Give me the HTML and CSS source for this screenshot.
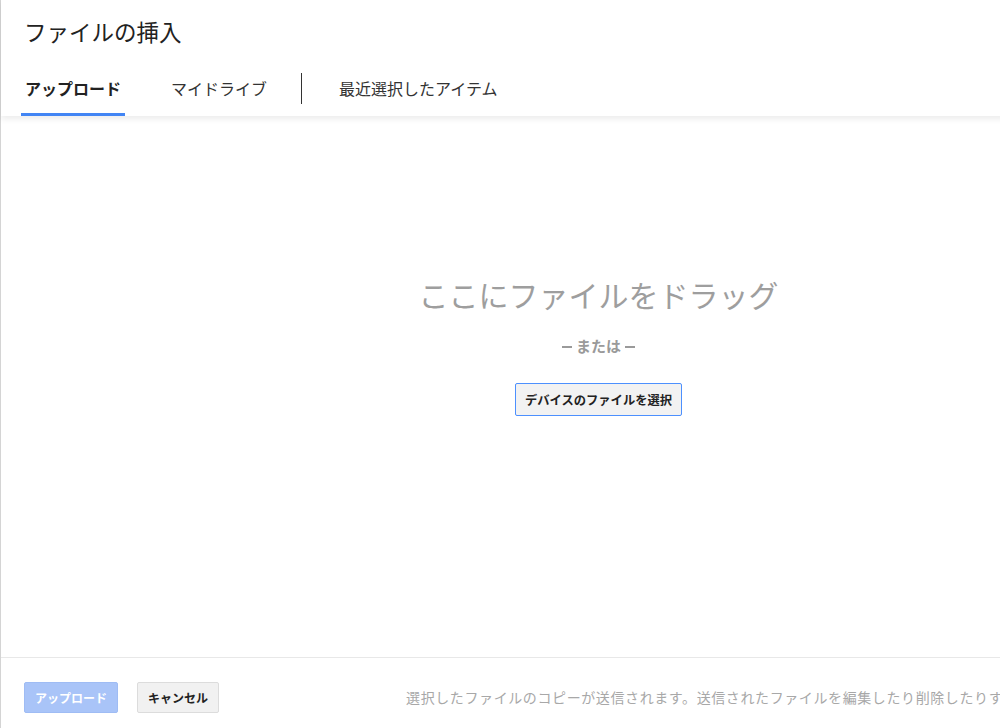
FILE: index.html
```html
<!DOCTYPE html>
<html lang="ja">
<head>
<meta charset="utf-8">
<title>ファイルの挿入</title>
<link rel="stylesheet" href="styles.css">
</head>
<body>
<div class="dialog">
  <header class="header">
    <h1 class="title">ファイルの挿入</h1>
    <nav class="tabs">
      <div class="tab active">アップロード</div>
      <div class="tab">マイドライブ</div>
      <div class="sep"></div>
      <div class="tab">最近選択したアイテム</div>
    </nav>
  </header>
  <main class="content">
    <div class="drag">ここにファイルをドラッグ</div>
    <div class="or"><span class="dash"></span>または<span class="dash"></span></div>
    <button class="pick">デバイスのファイルを選択</button>
  </main>
  <footer class="footer">
    <button class="btn primary">アップロード</button>
    <button class="btn">キャンセル</button>
    <div class="note">選択したファイルのコピーが送信されます。送信されたファイルを編集したり削除したりすることはできません。</div>
  </footer>
</div>
</body>
</html>
```

FILE: styles.css
```css
html, body {
  margin: 0;
  padding: 0;
  height: 100%;
  overflow: hidden;
  background: #fff;
}
body {
  font-family: "Noto Sans CJK JP", "Noto Sans", Arial, sans-serif;
  color: #222;
}
.dialog {
  width: 1196px;
  height: 728px;
  box-sizing: border-box;
  border-left: 1px solid #d4d4d4;
  display: flex;
  flex-direction: column;
}
.header {
  height: 116px;
  box-sizing: border-box;
  display: flex;
  flex-direction: column;
  box-shadow: 0 3px 6px rgba(0,0,0,0.08);
  position: relative;
  z-index: 1;
}
.title {
  margin: 17px 0 0 23px;
  font-size: 22.5px;
  font-weight: 400;
  line-height: 28px;
  color: #222;
}
.tabs {
  margin-top: 15px;
  padding-left: 20px;
  display: flex;
  align-items: center;
  height: 56px;
}
.tab {
  height: 56px;
  box-sizing: border-box;
  padding: 0 4px;
  display: flex;
  align-items: center;
  font-size: 16px;
  color: #333;
  border-bottom: 3px solid transparent;
  padding-top: 3px;
  margin-right: 42px;
}
.tab.active {
  font-weight: 700;
  color: #222;
  border-bottom-color: #4285f4;
}
.sep {
  width: 1px;
  height: 31px;
  background: #333;
  margin: 0 33px 0 -12px;
}
.content {
  flex: 1;
  display: flex;
  flex-direction: column;
  align-items: center;
  padding-top: 160px;
  box-sizing: border-box;
}
.drag {
  font-size: 30px;
  line-height: 36px;
  color: #9e9e9e;
}
.or {
  margin-top: 24px;
  font-size: 15px;
  line-height: 20px;
  font-weight: 700;
  color: #9a9a9a;
  display: flex;
  align-items: center;
  gap: 4px;
}
.dash {
  display: inline-block;
  width: 10px;
  height: 2px;
  background: #9a9a9a;
  margin-top: 1px;
}
.pick {
  margin-top: 27px;
  height: 33px;
  padding: 0 9px;
  font-family: inherit;
  font-size: 12.3px;
  font-weight: 700;
  color: #222;
  background: #f2f2f2;
  border: 1px solid #4d90fe;
  border-radius: 2px;
}
.footer {
  height: 71px;
  box-sizing: border-box;
  border-top: 1px solid #e8e8e8;
  display: flex;
  align-items: flex-start;
  padding: 24px 0 0 23px;
  gap: 19px;
}
.btn {
  height: 31px;
  padding: 0 10px;
  font-family: inherit;
  font-size: 12px;
  font-weight: 700;
  color: #222;
  background: #f1f1f1;
  border: 1px solid #dcdcdc;
  border-radius: 2px;
}
.btn.primary {
  background: #a9c4f8;
  border-color: #9fbcf4;
  color: #fff;
}
.note {
  margin-left: 168px;
  font-size: 14px;
  letter-spacing: 0.6px;
  line-height: 31px;
  color: #a8a8a8;
  white-space: nowrap;
}
```
